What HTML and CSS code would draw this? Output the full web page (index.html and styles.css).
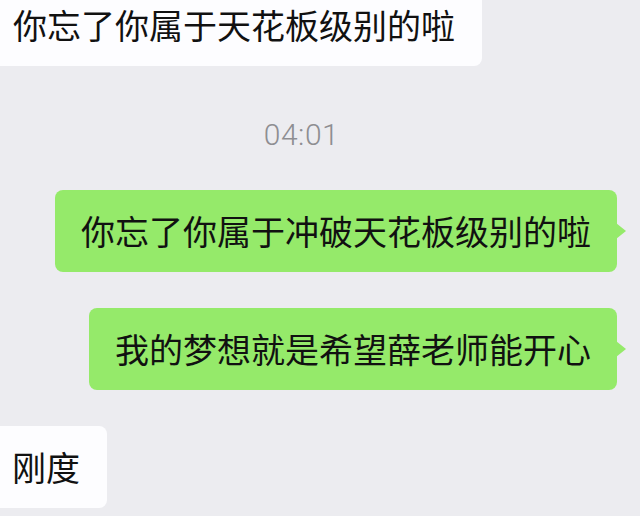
FILE: index.html
```html
<!DOCTYPE html>
<html lang="zh-CN">
<head>
<meta charset="utf-8">
<title>聊天</title>
<link rel="stylesheet" href="styles.css">
</head>
<body>
<main class="chat">
  <div class="row row-in row-first">
    <div class="bubble bubble-in bubble-wide">你忘了你属于天花板级别的啦</div>
  </div>
  <div class="time">04:01</div>
  <div class="row row-out">
    <div class="bubble bubble-out">你忘了你属于冲破天花板级别的啦</div>
  </div>
  <div class="row row-out">
    <div class="bubble bubble-out">我的梦想就是希望薛老师能开心</div>
  </div>
  <div class="row row-in">
    <div class="bubble bubble-in">刚度</div>
  </div>
</main>
</body>
</html>
```

FILE: styles.css
```css
html, body {
  margin: 0;
  padding: 0;
}

body {
  width: 640px;
  height: 516px;
  overflow: hidden;
  background: #ececf0;
  font-family: "Noto Sans CJK SC", "Noto Sans", sans-serif;
  color: #111;
}

.chat {
  display: flex;
  flex-direction: column;
  gap: 36px;
}

.row {
  display: flex;
}

.row-first {
  margin-top: -16px;
}

.row-in {
  justify-content: flex-start;
}

.row-out {
  justify-content: flex-end;
  padding-right: 23px;
}

.bubble {
  position: relative;
  font-size: 34px;
  line-height: 36px;
  padding: 23px 26px;
  border-radius: 8px;
  white-space: nowrap;
}

.bubble-in {
  background: #fdfdff;
  border-radius: 0 8px 8px 0;
  padding-left: 12px;
  padding-right: 27px;
}

.bubble-wide {
  padding-left: 13px;
}

.bubble-out {
  background: #95ea6a;
}

.bubble-out::after {
  content: "";
  position: absolute;
  right: -9px;
  top: 50%;
  margin-top: -8px;
  border-left: 10px solid #95ea6a;
  border-top: 8px solid transparent;
  border-bottom: 8px solid transparent;
}

.time {
  margin-top: 16px;
  margin-bottom: 2px;
  padding-right: 37px;
  text-align: center;
  font-family: Roboto, "Noto Sans", sans-serif;
  font-weight: 300;
  font-size: 30px;
  letter-spacing: 0.5px;
  line-height: 34px;
  color: #8e8e92;
}
```
